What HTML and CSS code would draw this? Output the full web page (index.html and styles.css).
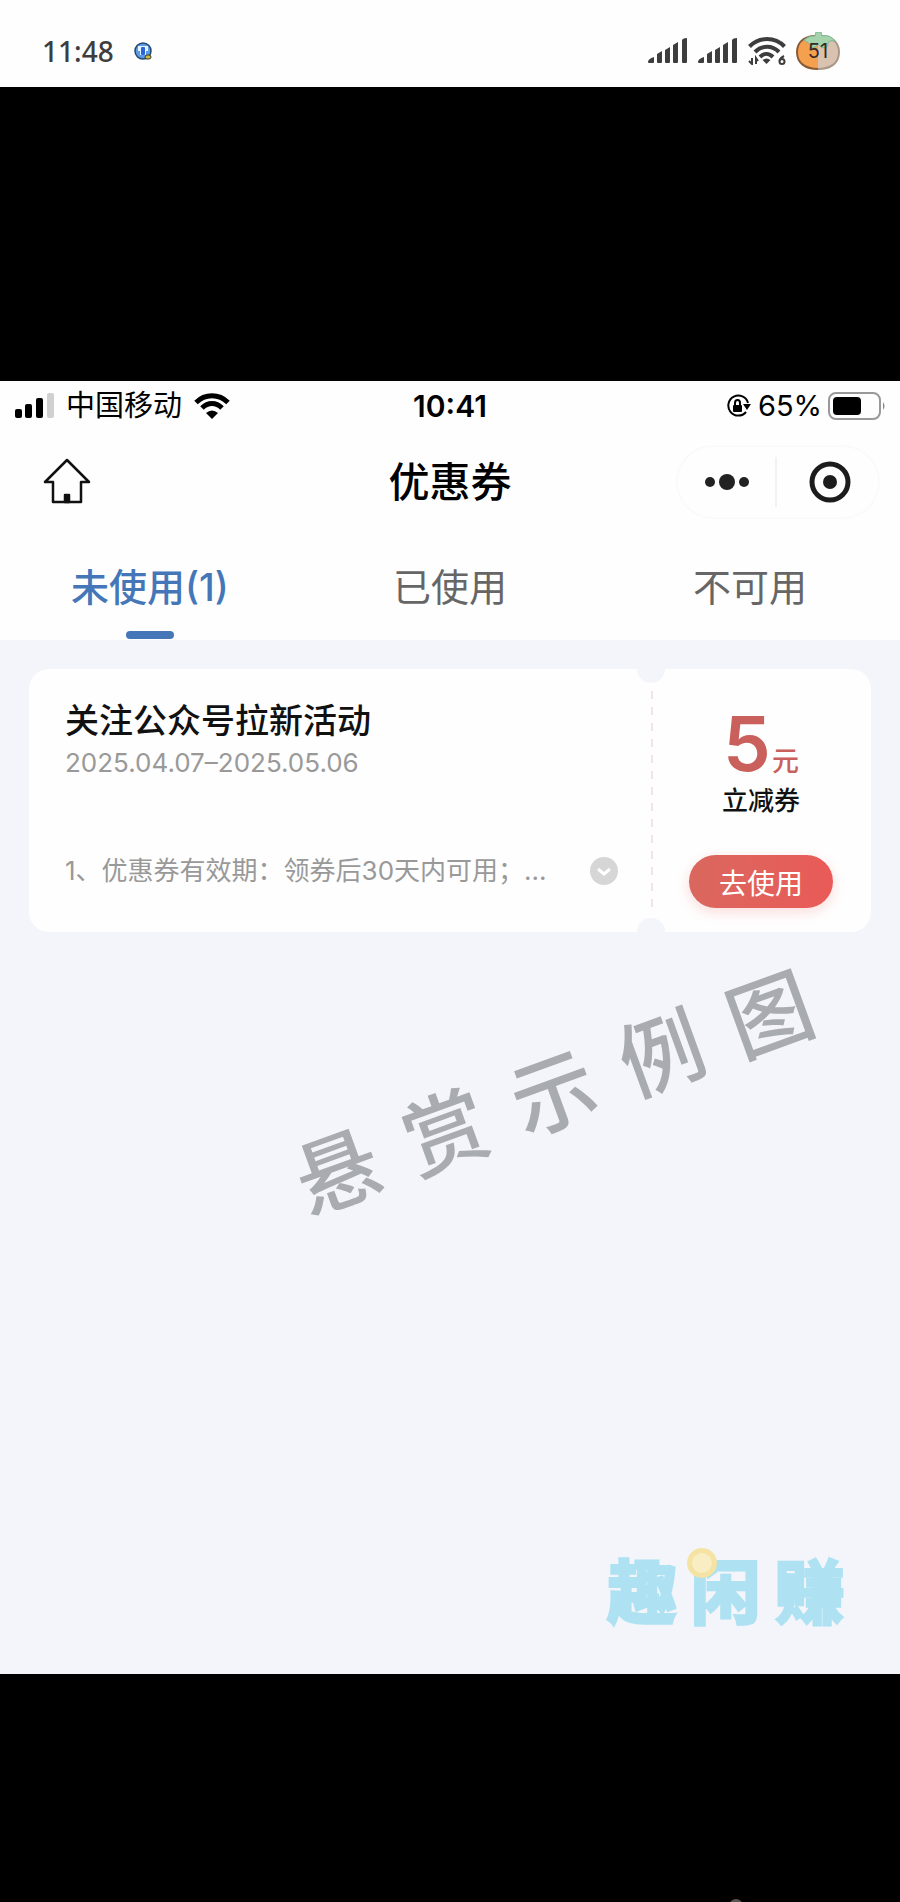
FILE: index.html
```html
<!doctype html>
<html lang="zh-CN">
<head>
	<meta charset="utf-8">
	<meta name="viewport" content="width=device-width, initial-scale=1">
	<title>优惠券</title>
	<link rel="stylesheet" href="styles.css">
</head>
<body>
	<div class="phone-bar">
		<span class="phone-time">11:48</span>
		<svg class="app-icon" width="18" height="18" viewBox="0 0 18 18">
			<circle cx="9" cy="9" r="8" fill="#5b9be8" stroke="#27476f" stroke-width="1.5"/>
			<path d="M4 4h10v5h-2v4H6V9H4z" fill="#e4f4ff"/>
			<rect x="7" y="5" width="4" height="8" rx="1" fill="#2d63d8"/>
			<rect x="11" y="13" width="6" height="4" rx="2" fill="#c7b944" stroke="#3a3d20"/>
		</svg>
		<div class="phone-icons">
			<svg width="40" height="26" viewBox="0 0 40 26" fill="#3d3d3d">
				<path d="M0 24q0-3 6-5v5q0 1-1 1H1q-1 0-1-1zM9 16l5-3v11q0 1-1 1h-3q-1 0-1-1zM17 12l5-3v15q0 1-1 1h-3q-1 0-1-1zM25 7l5-3v20q0 1-1 1h-3q-1 0-1-1zM34 2q1-2 5-2v24q0 1-1 1h-3q-1 0-1-1z"/>
			</svg>
			<svg width="40" height="26" viewBox="0 0 40 26" fill="#3d3d3d">
				<path d="M0 24q0-3 6-5v5q0 1-1 1H1q-1 0-1-1zM9 16l5-3v11q0 1-1 1h-3q-1 0-1-1zM17 12l5-3v15q0 1-1 1h-3q-1 0-1-1zM25 7l5-3v20q0 1-1 1h-3q-1 0-1-1zM34 2q1-2 5-2v24q0 1-1 1h-3q-1 0-1-1z"/>
			</svg>
			<svg width="38" height="28" viewBox="0 0 38 28" fill="none" stroke="#3d3d3d" stroke-width="4">
				<path d="M1.500 9.500C11-.5 27-.5 36.500 9.500M7 15c7-7 17-7 24 0M12 20c4-4 9-4 13 0"/>
				<path d="M14.500 23q4-3 8 0l-4 4z" fill="#3d3d3d" stroke="none"/>
				<path d="M4 21v6l-3-3M8 27v-6l2 3" stroke-width="2"/>
				<path d="M36 19q-4 2-4.500 5" stroke-width="2"/>
				<circle cx="34" cy="24.500" r="2.500" stroke-width="2"/>
			</svg>
			<div class="phone-battery">
				<svg width="44" height="38" viewBox="0 0 44 38">
					<path d="M22 4C10 3 1 9 1 20s8 17 21 17z" fill="#f4a04f"/>
					<path d="M22 4c12-1 21 5 21 16s-8 17-21 17z" fill="#d9c3b0"/>
					<path d="M22 4C10 3 1 9 1 20s8 17 21 17" fill="none" stroke="#8a5a35" stroke-width="2"/>
					<path d="M22 4c12-1 21 5 21 16s-8 17-21 17" fill="none" stroke="#a99789" stroke-width="2"/>
					<path d="M8 8q6-5 11-4l1-4h5l1 4q8-2 13 5-6-1-7 2 0 5-4 5-4-1-6-4-3 5-7 3-1-4-7-7z" fill="#a4d3ac" stroke="#7fb693"/>
				</svg>
				<span>51</span>
			</div>
		</div>
	</div>

	<main class="screen">
		<header class="header">
			<div class="ios-bar">
				<div class="ios-left">
					<svg width="40" height="26" viewBox="0 0 40 26">
						<rect x="1" y="16" width="7" height="9" rx="2"/>
						<rect x="11" y="11" width="7" height="14" rx="2"/>
						<rect x="22" y="5" width="7" height="20" rx="2"/>
						<rect x="33" y="0" width="7" height="25" rx="2" fill="#d0d0d0"/>
					</svg>
					<span>中国移动</span>
					<svg width="36" height="26" viewBox="0 0 36 26">
						<path d="M2 9.500C11 .5 25 .5 34 9.500M8 15c6-6 14-6 20 0" fill="none" stroke="#000" stroke-width="5"/>
						<path d="M12 20q6-5 12 0l-6 6z"/>
					</svg>
				</div>
				<span class="ios-time">10:41</span>
				<div class="ios-right">
					<svg width="26" height="24" viewBox="0 0 26 24">
						<path d="M22 9a10 10 0 1 0-2 9" fill="none" stroke="#000" stroke-width="2"/>
						<path d="M17 10h8l-4 6z"/>
						<rect x="7" y="11" width="9" height="7" rx="1"/>
						<path d="M9 11V9q0-3 2.500-3T14 9v2" fill="none" stroke="#000" stroke-width="2"/>
					</svg>
					<span class="percent">65%</span>
					<svg width="58" height="28" viewBox="0 0 58 28">
						<rect x="1" y="1" width="51" height="26" rx="7" fill="none" stroke="#999" stroke-width="2"/>
						<rect x="5" y="5" width="28" height="18" rx="4"/>
						<path d="M55 10q3 4 0 8z" fill="#888"/>
					</svg>
				</div>
			</div>

			<div class="nav">
				<a class="home" href="#" aria-label="首页">
					<svg width="48" height="48" viewBox="0 0 48 48" fill="none" stroke="#111" stroke-width="2.500" stroke-linejoin="round">
						<path d="M24 2L2 24h8v20h28V24h8z"/>
						<rect x="22" y="37" width="4" height="7" fill="#111"/>
					</svg>
				</a>
				<h1>优惠券</h1>
				<div class="capsule">
					<button type="button" aria-label="更多">
						<svg width="46" height="16" viewBox="0 0 46 16" fill="#222"><circle cx="6" cy="8" r="5"/><circle cx="23" cy="8" r="8"/><circle cx="40" cy="8" r="5"/></svg>
					</button>
					<button type="button" aria-label="关闭">
						<svg width="42" height="42" viewBox="0 0 42 42"><circle cx="21" cy="21" r="18" fill="none" stroke="#1c1c1c" stroke-width="5"/><circle cx="21" cy="21" r="7" fill="#1c1c1c"/></svg>
					</button>
				</div>
			</div>

			<nav class="tabs">
				<a class="tab active" href="#">未使用(1)</a>
				<a class="tab" href="#">已使用</a>
				<a class="tab" href="#">不可用</a>
			</nav>
		</header>

		<section class="coupon">
			<div class="info">
				<h2>关注公众号拉新活动</h2>
				<p class="date">2025.04.07–2025.05.06</p>
				<div class="rule">
					<p>1、优惠券有效期：领券后30天内可用；...</p>
					<button class="more" type="button" aria-label="展开">
						<svg width="30" height="30" viewBox="0 0 30 30"><circle cx="15" cy="15" r="14" fill="#d6d6d6"/><path d="M9 13l6 5 6-5" fill="none" stroke="#fff" stroke-width="3"/></svg>
					</button>
				</div>
			</div>
			<div class="value">
				<p class="price"><b>5</b>元</p>
				<p class="kind">立减券</p>
				<button class="use" type="button">去使用</button>
			</div>
		</section>

		<div class="watermark"><span>悬</span><span>赏</span><span>示</span><span>例</span><span>图</span></div>

		<div class="brand">
			<span>趣</span><span class="coin">闲</span><span>赚</span>
		</div>
	</main>

	<footer class="bottom"><i class="knob"></i></footer>
</body>
</html>
```
FILE: styles.css
```css
*{
	box-sizing: border-box;
}
body{
	margin: 0;
	min-height: 100vh;
	display: flex;
	flex-direction: column;
	background: #000;
	font-family: Inter, "Noto Sans CJK SC", sans-serif;
	color: #000;
}
h1, h2, p{
	margin: 0;
}
a{
	color: inherit;
	text-decoration: none;
}
button{
	border: 0;
	padding: 0;
	background: none;
	font-family: inherit;
	cursor: pointer;
}
svg{
	display: block;
	flex: none;
}

/* outer phone status bar */
.phone-bar{
	display: flex;
	align-items: center;
	height: 87px;
	padding: 14px 60px 0 42px;
	background: #fefefe;
	color: #3d3d3d;
}
.phone-time{
	font-family: "Noto Sans", sans-serif;
	font-size: 28px;
	line-height: 36px;
	font-weight: 500;
}
.app-icon{
	margin-left: 20px;
}
.phone-icons{
	display: flex;
	align-items: center;
	gap: 10px;
	margin-left: auto;
}
.phone-battery{
	display: grid;
	place-items: center;
	color: #332b25;
	font-size: 20px;
}
.phone-battery > *{
	grid-area: 1 / 1;
}

.screen{
	display: flex;
	flex-direction: column;
	flex: 1;
	margin-top: 294px;
	background: #f3f5fa;
}
.header{
	background: #fefefe;
}
.ios-bar{
	display: grid;
	grid-template-columns: 1fr auto 1fr;
	align-items: center;
	height: 50px;
	padding: 0 14px;
	font-size: 29px;
	line-height: 40px;
}
.ios-left, .ios-right{
	display: flex;
	align-items: center;
	gap: 12px;
}
.ios-right{
	justify-content: flex-end;
	gap: 6px;
}
.ios-time{
	font-size: 30px;
	font-weight: 600;
}
.nav{
	display: grid;
	grid-template-columns: 1fr auto 1fr;
	align-items: center;
	height: 102px;
	padding: 0 20px 0 43px;
}
.home{
	justify-self: start;
}
h1{
	font-size: 41px;
	line-height: 56px;
	font-weight: 500;
	padding-right: 23px;
}
.capsule{
	justify-self: end;
	display: flex;
	width: 204px;
	height: 74px;
	border: 2px solid #fafafa;
	border-radius: 37px;
}
.capsule button{
	flex: 1;
	display: grid;
	place-items: center;
}
.capsule button + button{
	padding-left: 6px;
	background: linear-gradient(#f2f2f2, #f2f2f2) left center / 2px 50px no-repeat;
}
.tabs{
	display: grid;
	grid-template-columns: repeat(3, 1fr);
	height: 107px;
}
.tab{
	display: flex;
	flex-direction: column;
	align-items: center;
	justify-content: space-between;
	padding-top: 26px;
	font-size: 38px;
	line-height: 56px;
	color: #666;
}
.tab.active{
	color: #4577b8;
	font-weight: 500;
}
.tab.active::after{
	content: "";
	width: 48px;
	height: 8px;
	margin-bottom: 1px;
	border-radius: 4px;
	background: #4577b8;
}

/* coupon ticket, the notches are cut where the two halves meet */
.coupon{
	position: relative;
	display: flex;
	margin: 29px 29px 0;
	border-radius: 20px;
	background: #fefefe;
}
.coupon::before, .coupon::after{
	content: "";
	position: absolute;
	right: 206px;
	width: 28px;
	height: 14px;
	background: #f3f5fa;
}
.coupon::before{
	top: 0;
	border-radius: 0 0 14px 14px;
}
.coupon::after{
	bottom: 0;
	border-radius: 14px 14px 0 0;
}
.info{
	flex: 1;
	min-width: 0;
	padding: 28px 32px 30px 36px;
}
.info h2{
	font-size: 34px;
	line-height: 48px;
	font-weight: 500;
	color: #111;
}
.date{
	font-size: 26px;
	line-height: 36px;
	color: #999;
}
.rule{
	display: flex;
	align-items: center;
	justify-content: space-between;
	margin-top: 70px;
	font-size: 26px;
	line-height: 40px;
	color: #999;
}
.value{
	width: 220px;
	display: flex;
	flex-direction: column;
	align-items: center;
	padding: 36px 0 24px;
	background: repeating-linear-gradient(#f3e4e7 0 8px, transparent 8px 16px) left center / 2px 220px no-repeat;
}
.price{
	display: flex;
	align-items: baseline;
	gap: 1px;
	font-size: 27px;
	line-height: 1;
	font-weight: 500;
	color: #c9605c;
}
.price b{
	font-size: 76px;
	font-weight: 600;
}
.kind{
	font-size: 26px;
	line-height: 40px;
	font-weight: 500;
	color: #111;
}
.use{
	width: 144px;
	height: 53px;
	margin-top: 34px;
	border-radius: 27px;
	background: linear-gradient(100deg, #d9685f, #ea5a57);
	box-shadow: 0 4px 14px #fadcda;
	color: #fff;
	font-size: 28px;
}

.watermark{
	display: flex;
	justify-content: center;
	gap: 31px;
	margin: 102px 0 0 208px;
	font-size: 84px;
	line-height: 120px;
	font-weight: 500;
	color: #a8acb0;
	transform: rotate(-20deg);
}
.brand{
	display: flex;
	justify-content: flex-end;
	gap: 14px;
	margin: auto 55px 28px;
	font-size: 70px;
	line-height: 104px;
	font-weight: 900;
	color: #aee2f3;
	-webkit-text-stroke: 2px #aee2f3;
}
.coin{
	position: relative;
}
.coin::before{
	content: "";
	position: absolute;
	left: -4px;
	top: 6px;
	width: 20px;
	height: 20px;
	border: 5px solid #f5e3a3;
	border-radius: 50%;
	background: #f9edc4;
}
.bottom{
	display: flex;
	align-items: flex-end;
	height: 228px;
	padding-left: 81%;
	overflow: hidden;
}
.knob{
	width: 14px;
	height: 14px;
	margin-bottom: -11px;
	border-radius: 50%;
	background: #5d554f;
}
```
